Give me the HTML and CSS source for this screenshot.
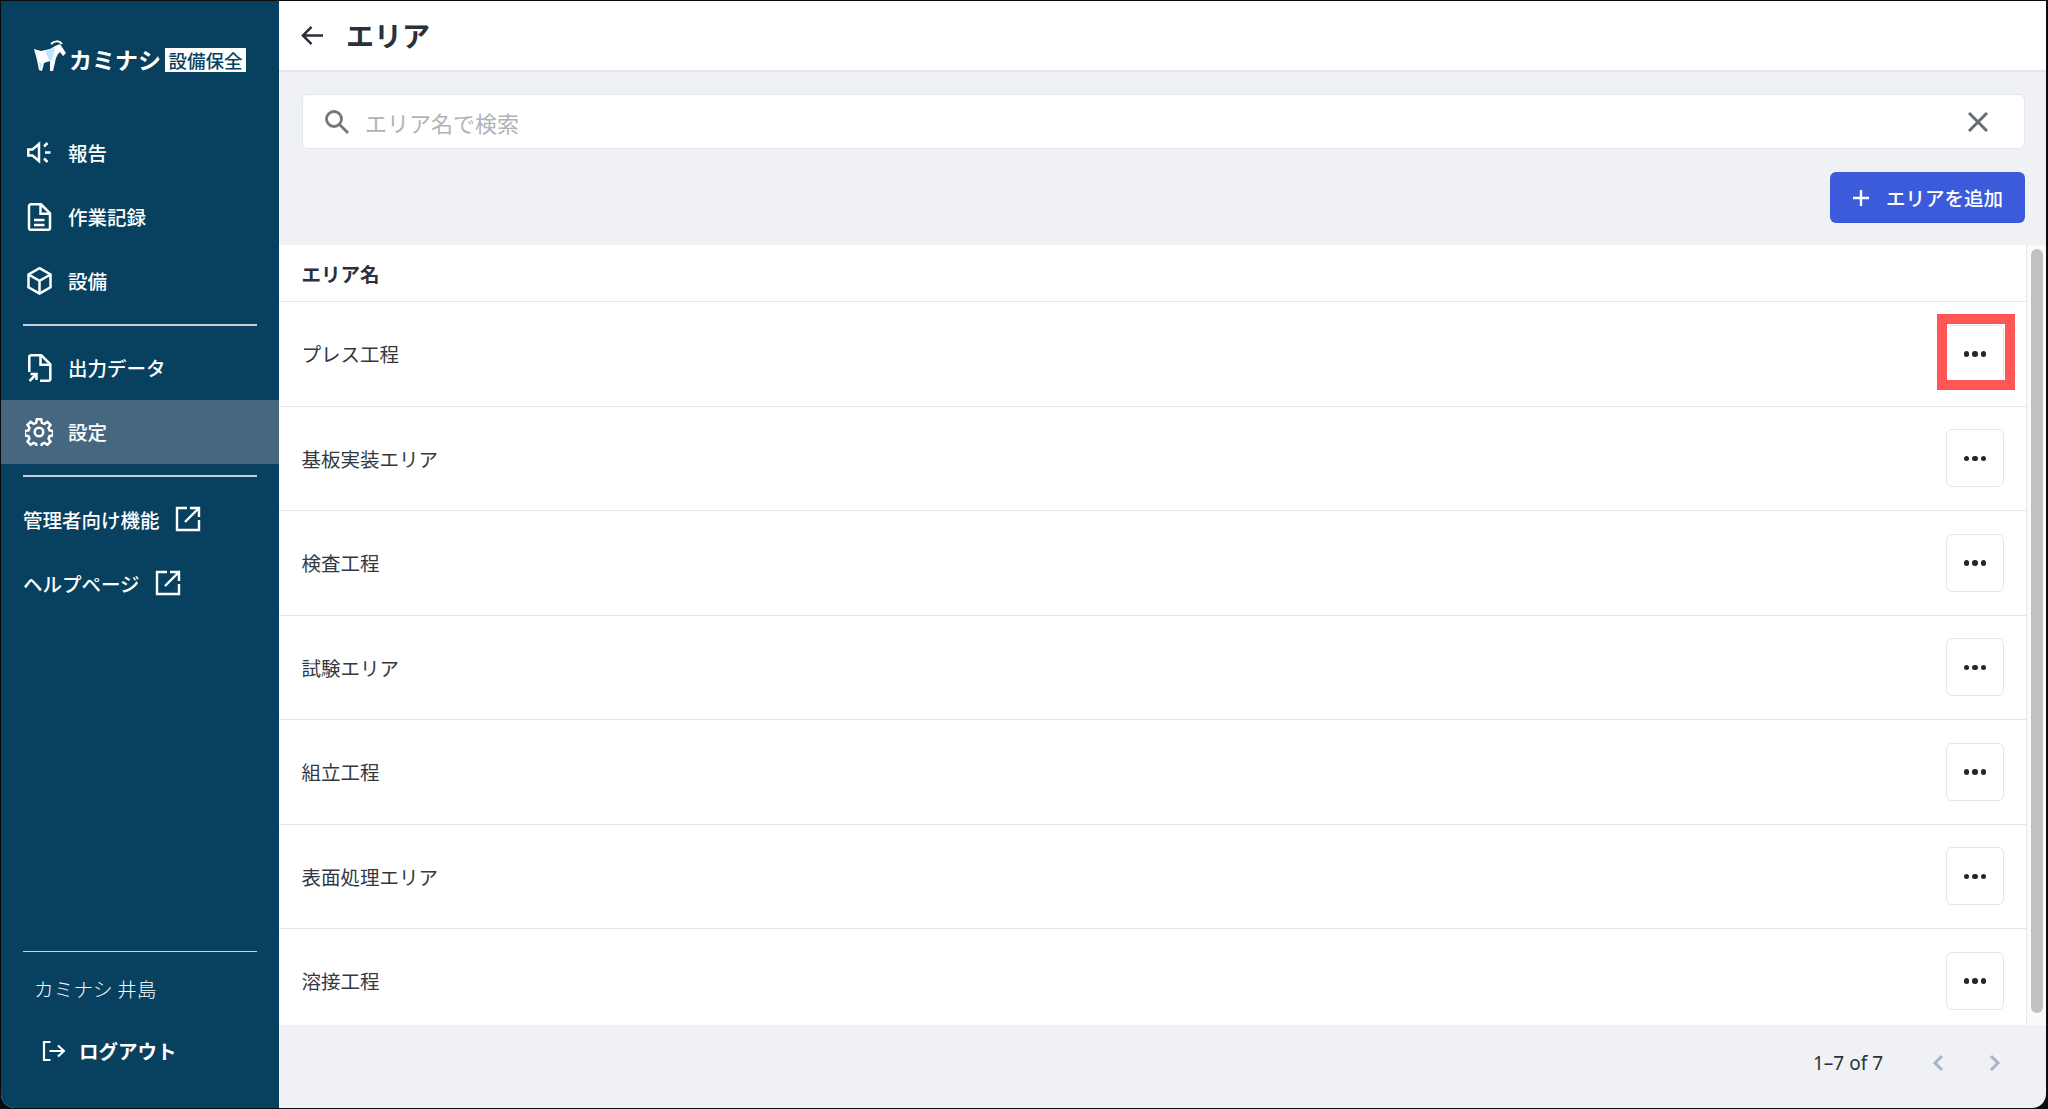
FILE: index.html
```html
<!DOCTYPE html>
<html lang="ja">
<head>
<meta charset="utf-8">
<title>エリア</title>
<link rel="stylesheet" href="styles.css">
</head>
<body>
<div class="window">
  <aside class="sidebar">
    <div class="logo">
      <svg class="goat" viewBox="0 0 32 32"><path d="M0 9l7 2 9-2 5-3 5-2 6 9-3 3-3-4-2 2-2 4-3 13h-3V21l-6 2-2 8-3-1-2-10z" fill="#fff"/><path d="M17 4c3-3 8-4 11 0" fill="none" stroke="#fff" stroke-width="2"/><path d="M11 11l10-4-2 11-3 4z" fill="#bfe4fb"/><path d="M5 22l3 2-2 6z" fill="#bfe4fb"/></svg>
      <span class="logo-name">カミナシ</span>
      <span class="logo-tag">設備保全</span>
    </div>
    <nav class="nav-group">
      <a class="nav-item"><svg class="icon" viewBox="0 0 28 28"><path d="M3.300 10.500h4.200L14 5v17l-6.500-5.500H3.300z"/><path d="M19 7.500l3.500-3.500M20 13.500h5.500M19 19.500l3.500 3.500"/></svg>報告</a>
      <a class="nav-item"><svg class="icon" viewBox="0 0 28 28"><path d="M6 1.300h10l9 9V25a1.700 1.700 0 0 1-1.700 1.700H5.700A1.700 1.700 0 0 1 4 25V3.300a2 2 0 0 1 2-2z"/><path d="M15.500 1.300v9.500H25M9 17h10.500M9 22h10.500"/></svg>作業記録</a>
      <a class="nav-item"><svg class="icon" viewBox="0 0 28 28"><path d="M14.500 1.200l11 6.300v12.800l-11 6.300-11-6.300V7.500z"/><path d="M3.500 7.500l11 6.400 11-6.400M14.500 13.900v12.700"/></svg>設備</a>
    </nav>
    <div class="rule"></div>
    <nav class="nav-group">
      <a class="nav-item"><svg class="icon" viewBox="0 0 28 28"><path d="M4.300 18V3.300a2 2 0 0 1 2-2h10l9 9V25a1.700 1.700 0 0 1-1.700 1.700H15"/><path d="M15.500 1.300v9.500H25"/><path d="M4.500 27l6.500-6.500M5.500 20h6v6"/></svg>出力データ</a>
      <a class="nav-item active"><svg class="icon" viewBox="0 0 28 28"><circle cx="14" cy="14" r="4.300"/><path d="M11.800 1.300h4.400l.7 3.500 2.500 1 3-2 3.100 3.100-2 3 1 2.500 3.500.7v4.400l-3.500.7-1 2.500 2 3-3.100 3.100-3-2-2.500 1-.7 3.500h-4.400l-.7-3.500-2.500-1-3 2-3.100-3.100 2-3-1-2.500-3.500-.7v-4.400l3.500-.7 1-2.500-2-3 3.100-3.100 3 2 2.500-1z"/></svg>設定</a>
    </nav>
    <div class="rule"></div>
    <nav class="nav-group">
      <a class="ext-item">管理者向け機能<svg class="ext" viewBox="0 0 26 26"><path d="M12 2H2v22h22V14"/><path d="M10 16L24 2M15 2h9v9"/></svg></a>
      <a class="ext-item">ヘルプページ<svg class="ext" viewBox="0 0 26 26"><path d="M12 2H2v22h22V14"/><path d="M10 16L24 2M15 2h9v9"/></svg></a>
    </nav>
    <div class="sidebar-foot">
      <div class="rule"></div>
      <div class="user">カミナシ 井島</div>
      <a class="logout"><svg class="logout-icon" viewBox="0 0 24 24"><path d="M9.500 3H3v18h6.500"/><path d="M8.500 12h14.500M17 6.500l6 5.500-6 5.500"/></svg>ログアウト</a>
    </div>
  </aside>
  <main class="main">
    <header class="topbar">
      <svg class="back" viewBox="0 0 24 24"><path d="M23 12H2M11 3l-9 9 9 9"/></svg>
      <h1 class="title">エリア</h1>
    </header>
    <div class="search">
      <svg class="search-icon" viewBox="0 0 26 26"><circle cx="10" cy="10" r="7.500"/><path d="M15.500 15.500L24 24"/></svg>
      <span class="placeholder">エリア名で検索</span>
      <svg class="clear" viewBox="0 0 20 20"><path d="M1 1l18 18M19 1L1 19"/></svg>
    </div>
    <div class="actions">
      <button class="add"><svg class="plus" viewBox="0 0 18 18"><path d="M9 1v16M1 9h16"/></svg>エリアを追加</button>
    </div>
    <section class="table">
      <div class="table-scroll">
        <div class="thead">エリア名</div>
        <div class="row"><span>プレス工程</span><span class="more-wrap"><button class="more"><i></i><i></i><i></i></button><span class="highlight"></span></span></div>
        <div class="row"><span>基板実装エリア</span><button class="more"><i></i><i></i><i></i></button></div>
        <div class="row"><span>検査工程</span><button class="more"><i></i><i></i><i></i></button></div>
        <div class="row"><span>試験エリア</span><button class="more"><i></i><i></i><i></i></button></div>
        <div class="row"><span>組立工程</span><button class="more"><i></i><i></i><i></i></button></div>
        <div class="row"><span>表面処理エリア</span><button class="more"><i></i><i></i><i></i></button></div>
        <div class="row"><span>溶接工程</span><button class="more"><i></i><i></i><i></i></button></div>
      </div>
      <div class="scrollbar"><div class="thumb"></div></div>
    </section>
    <footer class="pager">
      <span class="count">1–7 of 7</span>
      <svg class="chev" viewBox="0 0 12 18"><path d="M10 2L3 9l7 7"/></svg>
      <svg class="chev" viewBox="0 0 12 18"><path d="M2 2l7 7-7 7"/></svg>
    </footer>
  </main>
</div>
</body>
</html>
```
FILE: styles.css
```css
* { box-sizing: border-box; }
html, body { margin: 0; height: 100%; }
body { background: #0c0c0e; font-family: "Noto Sans CJK JP", "Noto Sans", sans-serif; overflow: hidden; }
.window { margin: 1px 2px 0 1px; height: 1107px; display: flex; border-radius: 0 0 14px 14px; overflow: hidden; background: #eff1f5; }

.sidebar { width: 278px; flex: none; background: #07415f; color: #fff; display: flex; flex-direction: column; padding-top: 39px; }
.logo { display: flex; align-items: center; height: 40px; padding-left: 33px; margin-bottom: 41px; }
.goat { width: 32px; height: 32px; flex: none; align-self: flex-start; }
.logo-name { font-size: 23px; font-weight: 700; margin-left: 3px; margin-top: -2px; line-height: 33px; white-space: nowrap; width: 96px; }
.logo-tag { background: #fff; color: #07415f; font-size: 18.500px; font-weight: 500; line-height: 24px; height: 24px; width: 81px; text-align: center; white-space: nowrap; }
.nav-group { display: flex; flex-direction: column; }
.nav-item { height: 64px; display: flex; align-items: center; padding: 0 0 2px 24px; gap: 15px; font-size: 19.500px; font-weight: 500; }
.nav-item.active { background: #45677f; }
.icon { width: 28px; height: 28px; flex: none; fill: none; stroke: #fff; stroke-width: 2.500; margin-top: 2px; }
.rule { height: 1.500px; background: #c4d1da; margin: 11px 22px 10.500px; flex: none; }
.ext-item { height: 64px; display: flex; align-items: center; padding-left: 22px; gap: 15px; font-size: 19.500px; font-weight: 500; }
.ext { width: 26px; height: 26px; flex: none; fill: none; stroke: #fff; stroke-width: 2.400; }
.sidebar-foot { margin-top: auto; padding-bottom: 40px; }
.user { font-size: 19.500px; font-weight: 300; padding-left: 33px; line-height: 28px; margin-top: 23px; letter-spacing: .2px; }
.logout { display: flex; align-items: center; gap: 14px; padding-left: 40px; font-size: 19.500px; font-weight: 700; height: 36px; margin-top: 29px; }
.logout-icon { width: 24px; height: 24px; fill: none; stroke: #fff; stroke-width: 2.200; flex: none; margin-top: 1px; }

.main { flex: 1; min-width: 0; display: flex; flex-direction: column; }
.topbar { height: 71px; flex: none; background: #fff; border-bottom: 2px solid #e3e6ec; display: flex; align-items: center; padding-left: 22px; gap: 22px; }
.back { width: 23px; height: 23px; fill: none; stroke: #2b3138; stroke-width: 2.600; flex: none; }
.title { margin: 0 0 1px; font-size: 28px; font-weight: 700; color: #2b3138; line-height: 36px; }
.search { margin: 22px 21px 0 23px; height: 55px; flex: none; background: #fff; border: 1.500px solid #e1e6ef; border-radius: 6px; display: flex; align-items: center; padding: 0 36px 0 21px; }
.search-icon { width: 26px; height: 26px; fill: none; stroke: #777; stroke-width: 2.800; flex: none; }
.placeholder { font-size: 22px; color: #b0b3b8; margin-left: 15px; flex: 1; }
.clear { width: 20px; height: 20px; fill: none; stroke: #646e78; stroke-width: 3; flex: none; }
.actions { display: flex; justify-content: flex-end; margin: 23px 21px 22px 0; flex: none; }
.add { width: 195px; height: 51px; background: #3b5bdb; color: #fff; border: 0; border-radius: 6px; font-family: inherit; font-size: 19.500px; font-weight: 500; display: flex; align-items: center; padding: 0 0 0 22px; gap: 16px; }
.plus { width: 18px; height: 18px; fill: none; stroke: #fff; stroke-width: 2.400; flex: none; }
.table { height: 780px; flex: none; background: #fff; display: flex; overflow: hidden; }
.table-scroll { flex: 1; min-width: 0; overflow: hidden; }
.thead { height: 57px; border-bottom: 1.500px solid #e3e6ec; padding-left: 22.500px; display: flex; align-items: center; font-size: 19.500px; font-weight: 700; color: #2b3138; }
.row { height: 104.500px; border-bottom: 1.500px solid #e3e6ec; display: flex; align-items: center; justify-content: space-between; padding: 0 22px 0 22.500px; font-size: 19.500px; color: #33393f; }
.more-wrap { position: relative; display: flex; }
.more { width: 58px; height: 58px; background: #fff; border: 1.500px solid #e1e6ef; border-radius: 6px; display: flex; align-items: center; justify-content: center; gap: 3px; padding: 0; }
.more i { width: 5.500px; height: 5.500px; background: #23282f; border-radius: 50%; }
.highlight { position: absolute; left: -9px; top: -11px; width: 78px; height: 76px; border: 10px solid #ff5555; }
.scrollbar { width: 20px; flex: none; background: #fafafa; border-left: 1.500px solid #e8e8e8; padding: 4px 3px 12px 4px; }
.thumb { height: 100%; background: #c1c1c1; border-radius: 6px; }
.pager { flex: 1; display: flex; align-items: center; justify-content: flex-end; padding: 0 45px 8px 0; color: #2b3138; }
.count { font-size: 19px; font-family: "Noto Sans", sans-serif; margin-right: 49px; }
.chev { width: 12px; height: 18px; fill: none; stroke: #a9b5c4; stroke-width: 3; }
.chev + .chev { margin-left: 45px; }
```
